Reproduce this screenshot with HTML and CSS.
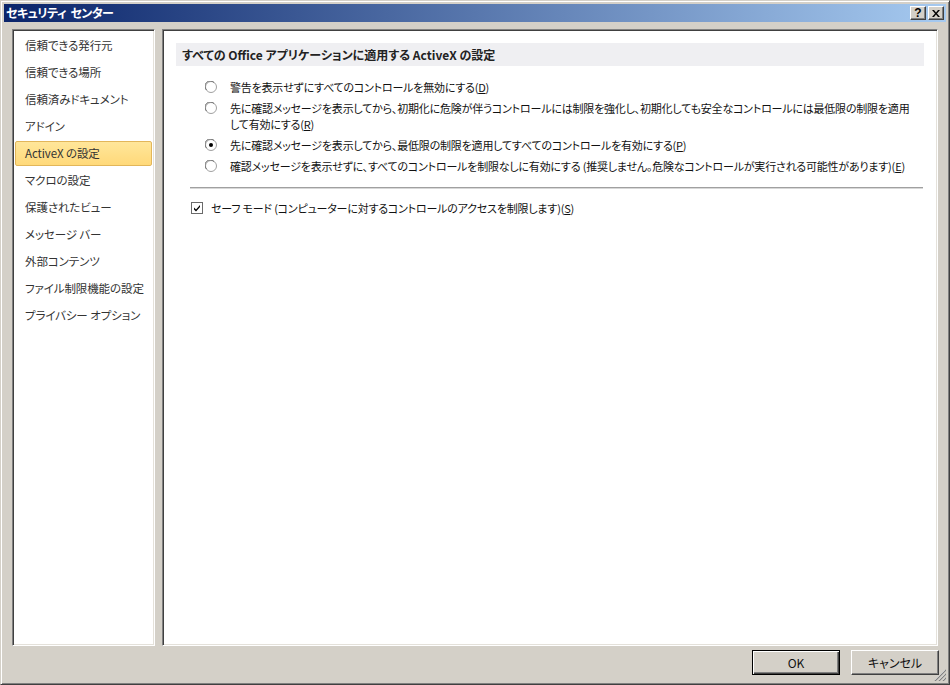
FILE: index.html
```html
<!DOCTYPE html>
<html lang="ja">
<head>
<meta charset="utf-8">
<title>セキュリティ センター</title>
<link rel="stylesheet" href="styles.css">
</head>
<body>
<div class="window">
  <div class="titlebar">
    <span class="title">セキュリティ センター</span>
    <div class="tbtns">
      <span class="tbtn help">?</span>
      <span class="tbtn close"><svg width="8" height="7" viewBox="0 0 8 7"><path d="M0 0h2l2 2.5L6 0h2L5 3.5 8 7H6L4 4.5 2 7H0l3-3.5z" fill="#000"/></svg></span>
    </div>
  </div>
  <div class="main">
    <div class="panel nav">
      <div class="nav-item">信頼できる発行元</div>
      <div class="nav-item">信頼できる場所</div>
      <div class="nav-item">信頼済みドキュメント</div>
      <div class="nav-item">アドイン</div>
      <div class="nav-item selected">ActiveX の設定</div>
      <div class="nav-item">マクロの設定</div>
      <div class="nav-item">保護されたビュー</div>
      <div class="nav-item">メッセージ バー</div>
      <div class="nav-item">外部コンテンツ</div>
      <div class="nav-item">ファイル制限機能の設定</div>
      <div class="nav-item">プライバシー オプション</div>
    </div>
    <div class="panel content">
      <div class="section-head">すべての Office アプリケーションに適用する ActiveX の設定</div>
      <div class="radios">
        <div class="radio-row">
          <svg class="radio" width="12" height="12" viewBox="0 0 12 12"><circle cx="6" cy="6" r="5.5" fill="#fff" stroke="#a0a0a0"/><path d="M1.5 9A5 5 0 0 1 9 1.5" fill="none" stroke="#707070"/></svg>
          <span class="label">警告を表示せずにすべてのコントロールを無効にする(<u>D</u>)</span>
        </div>
        <div class="radio-row">
          <svg class="radio" width="12" height="12" viewBox="0 0 12 12"><circle cx="6" cy="6" r="5.5" fill="#fff" stroke="#a0a0a0"/><path d="M1.5 9A5 5 0 0 1 9 1.5" fill="none" stroke="#707070"/></svg>
          <span class="label">先に確認メッセージを表示してから、初期化に危険が伴うコントロールには制限を強化し、初期化しても安全なコントロールには最低限の制限を適用<br>して有効にする(<u>R</u>)</span>
        </div>
        <div class="radio-row">
          <svg class="radio" width="12" height="12" viewBox="0 0 12 12"><circle cx="6" cy="6" r="5.5" fill="#fff" stroke="#a0a0a0"/><path d="M1.5 9A5 5 0 0 1 9 1.5" fill="none" stroke="#707070"/><circle cx="6" cy="6" r="2" fill="#000"/></svg>
          <span class="label">先に確認メッセージを表示してから、最低限の制限を適用してすべてのコントロールを有効にする(<u>P</u>)</span>
        </div>
        <div class="radio-row">
          <svg class="radio" width="12" height="12" viewBox="0 0 12 12"><circle cx="6" cy="6" r="5.5" fill="#fff" stroke="#a0a0a0"/><path d="M1.5 9A5 5 0 0 1 9 1.5" fill="none" stroke="#707070"/></svg>
          <span class="label">確認メッセージを表示せずに、すべてのコントロールを制限なしに有効にする (推奨しません。危険なコントロールが実行される可能性があります)(<u>E</u>)</span>
        </div>
      </div>
      <div class="sep"></div>
      <div class="check-row">
        <svg class="check" width="12" height="12" viewBox="0 0 12 12"><rect x="0.5" y="0.5" width="11" height="11" fill="#fff" stroke="#6a6a6a"/><path d="M3 5.5l2 2 4-4.5v2L5 9.5 3 7.5z" fill="#000"/></svg>
        <span class="label">セーフ モード (コンピューターに対するコントロールのアクセスを制限します)(<u>S</u>)</span>
      </div>
    </div>
  </div>
  <div class="footer">
    <button class="btn default">OK</button>
    <button class="btn">キャンセル</button>
  </div>
  <svg class="grip" width="12" height="12" viewBox="0 0 12 12">
    <path d="M11 1L1 11M11 5L5 11M11 9L9 11" stroke="#fff" stroke-width="1"/>
    <path d="M12 1L1 12M12 5L5 12M12 9L9 12" stroke="#808080" stroke-width="1.2"/>
  </svg>
</div>
</body>
</html>
```
FILE: styles.css
```css
* { box-sizing: border-box; }
html, body { margin: 0; padding: 0; }
body {
  width: 950px;
  height: 685px;
  overflow: hidden;
  font-family: "Noto Sans CJK JP", "Noto Sans", sans-serif;
  font-size: 12px;
  font-feature-settings: "palt";
  color: #111;
  background: #d4d0c8;
}
.window {
  position: relative;
  width: 950px;
  height: 685px;
  background: #d4d0c8;
  border-top: 1px solid #d4d0c8;
  border-left: 1px solid #d4d0c8;
  border-right: 1px solid #404040;
  border-bottom: 1px solid #404040;
  box-shadow: inset 1px 1px #fff, inset -1px -1px #808080;
  padding: 3px;
  display: flex;
  flex-direction: column;
}
.titlebar {
  flex: none;
  height: 18px;
  background: linear-gradient(to right, #0a246a, #a6caf0);
  display: flex;
  align-items: center;
  justify-content: space-between;
  padding: 0 2px 0 2px;
}
.title {
  color: #fff;
  font-weight: bold;
  font-size: 12px;
  line-height: 18px;
  letter-spacing: -0.5px;
  word-spacing: 2px;
}
.tbtns { display: flex; gap: 2px; }
.tbtn {
  width: 16px;
  height: 14px;
  background: #d4d0c8;
  border-top: 1px solid #fff;
  border-left: 1px solid #fff;
  border-right: 1px solid #404040;
  border-bottom: 1px solid #404040;
  box-shadow: inset -1px -1px #808080;
  display: flex;
  align-items: center;
  justify-content: center;
  font-family: "Liberation Sans", sans-serif;
  font-weight: bold;
  font-size: 12px;
  line-height: 12px;
  color: #000;
}
.main {
  flex: none;
  display: flex;
  gap: 7px;
  margin: 7px 4px 0 8px;
  height: 617px;
}
.panel {
  background: #fff;
  border-top: 1px solid #808080;
  border-left: 1px solid #808080;
  border-right: 1px solid #fff;
  border-bottom: 1px solid #fff;
  box-shadow: inset 1px 1px #404040, inset -1px -1px #e4e1da;
  min-width: 0;
  overflow: hidden;
}
.nav {
  flex: none;
  width: 143px;
  padding: 3px 2px 0 2px;
  display: flex;
  flex-direction: column;
  gap: 2px;
}
.nav-item {
  height: 25px;
  line-height: 23px;
  padding-left: 9px;
  border: 1px solid transparent;
  border-radius: 2px;
  color: #333;
  font-size: 11.5px;
  letter-spacing: -0.1px;
  white-space: nowrap;
}
.nav-item.selected {
  background: linear-gradient(#ffe69a, #ffd97a);
  border-color: #e2b65a;
}
.content {
  flex: none;
  width: 776px;
  padding: 13px 13px 0 13px;
}
.section-head {
  height: 23px;
  line-height: 23px;
  background: #efeff2;
  padding-left: 6px;
  font-weight: bold;
  color: #222;
  white-space: nowrap;
}
.radios {
  margin: 13px 0 0 29px;
  display: flex;
  flex-direction: column;
  gap: 5px;
}
.radio-row {
  display: flex;
  align-items: flex-start;
  gap: 13px;
  line-height: 16px;
  white-space: nowrap;
}
.label {
  font-size: 11px;
  letter-spacing: -0.2px;
}
.radio { flex: none; margin-top: 2px; }
.label u { text-decoration: underline; text-underline-offset: 1px; }
.sep {
  margin: 13px 1px 0 14px;
  height: 2px;
  background: #a0a0a0;
  border-bottom: 1px solid #d8d8d8;
}
.check-row {
  margin: 11px 0 0 15px;
  display: flex;
  align-items: center;
  gap: 8px;
  line-height: 16px;
  white-space: nowrap;
}
.check { flex: none; }
.footer {
  flex: none;
  display: flex;
  justify-content: flex-end;
  gap: 11px;
  margin: 4px 7px 0 0;
}
.btn {
  width: 88px;
  height: 25px;
  background: #d4d0c8;
  font-family: "Noto Sans CJK JP", "Noto Sans", sans-serif;
  font-size: 12px;
  font-feature-settings: "palt";
  color: #111;
  border-top: 1px solid #fff;
  border-left: 1px solid #fff;
  border-right: 1px solid #404040;
  border-bottom: 1px solid #404040;
  box-shadow: inset -1px -1px #808080;
  padding: 0;
}
.btn.default {
  border: 1px solid #000;
  box-shadow: inset 1px 1px #fff, inset -1px -1px #404040, inset -2px -2px #808080;
}
.grip {
  position: absolute;
  right: 3px;
  bottom: 3px;
}
```
